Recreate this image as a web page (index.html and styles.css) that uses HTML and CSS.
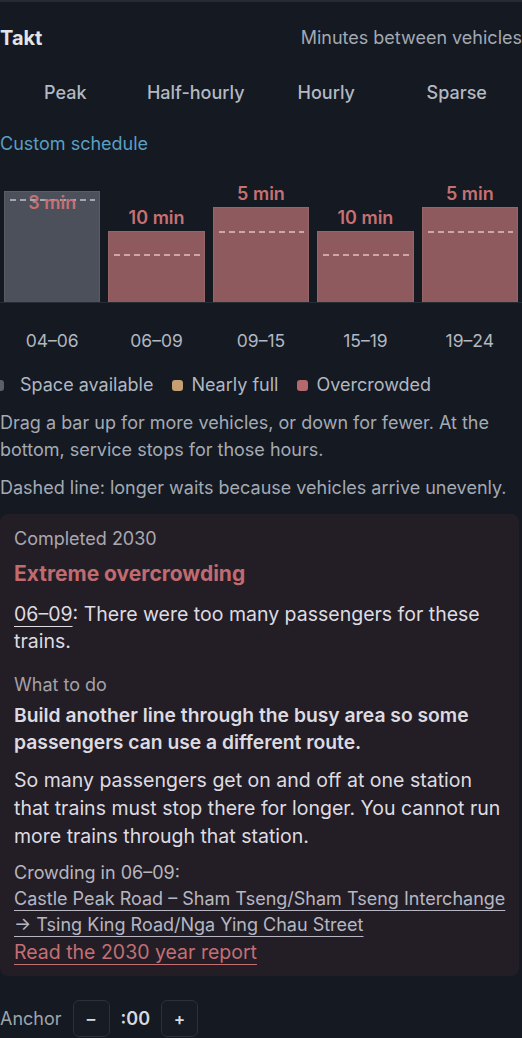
FILE: index.html
```html
<!DOCTYPE html>
<html lang="en">
<head>
<meta charset="utf-8">
<title>Takt</title>
<link rel="stylesheet" href="styles.css">
</head>
<body>
<div class="panel">
  <div class="head">
    <h2 class="title">Takt</h2>
    <span class="unit">Minutes between vehicles</span>
  </div>
  <div class="presets">
    <button class="preset">Peak</button>
    <button class="preset">Half-hourly</button>
    <button class="preset">Hourly</button>
    <button class="preset">Sparse</button>
  </div>
  <div class="custom">Custom schedule</div>
  <div class="chart">
    <div class="col"><div class="bar gray" style="height:111px"><span class="val inside">3 min</span><span class="dash" style="bottom:101px"></span></div></div>
    <div class="col"><div class="bar red" style="height:71px"><span class="val">10 min</span><span class="dash" style="bottom:46px"></span></div></div>
    <div class="col"><div class="bar red" style="height:95px"><span class="val">5 min</span><span class="dash" style="bottom:69px"></span></div></div>
    <div class="col"><div class="bar red" style="height:71px"><span class="val">10 min</span><span class="dash" style="bottom:46px"></span></div></div>
    <div class="col"><div class="bar red" style="height:95px"><span class="val">5 min</span><span class="dash" style="bottom:69px"></span></div></div>
  </div>
  <div class="axis">
    <span>04–06</span><span>06–09</span><span>09–15</span><span>15–19</span><span>19–24</span>
  </div>
  <div class="legend">
    <span class="item"><i class="sw sw-gray"></i>Space available</span>
    <span class="item"><i class="sw sw-tan"></i>Nearly full</span>
    <span class="item"><i class="sw sw-red"></i>Overcrowded</span>
  </div>
  <p class="hint hint-drag">Drag a bar up for more vehicles, or down for fewer. At the bottom, service stops for those hours.</p>
  <p class="hint hint-dash">Dashed line: longer waits because vehicles arrive unevenly.</p>

  <div class="card">
    <div class="card-kicker">Completed 2030</div>
    <div class="card-title">Extreme overcrowding</div>
    <p class="card-body"><span class="u">06–09</span>: There were too many passengers for these trains.</p>
    <div class="card-sub">What to do</div>
    <p class="card-strong">Build another line through the busy area so some passengers can use a different route.</p>
    <p class="card-body card-body2">So many passengers get on and off at one station that trains must stop there for longer. You cannot run more trains through that station.</p>
    <div class="card-crowd">Crowding in 06–09:</div>
    <a class="route" href="#">Castle Peak Road – Sham Tseng/Sham Tseng Interchange → Tsing King Road/Nga Ying Chau Street</a>
    <a class="report" href="#">Read the 2030 year report</a>
  </div>

  <div class="anchor">
    <span class="anchor-label">Anchor</span>
    <button class="step">–</button>
    <span class="anchor-val">:00</span>
    <button class="step">+</button>
  </div>
</div>
</body>
</html>
```

FILE: styles.css
```css
html, body {
  margin: 0;
  padding: 0;
  background: #141922;
}
body {
  font-family: Inter, "Noto Sans", "DejaVu Sans", sans-serif;
  color: #a4aab4;
  font-size: 18px;
  overflow: hidden;
}
.panel {
  border-top: 2px solid #252a33;
  width: 522px;
}
.head {
  display: flex;
  justify-content: space-between;
  align-items: center;
  margin-top: 24px;
  height: 24px;
}
.title {
  margin: 0;
  font-size: 20px;
  font-weight: 700;
  color: #e2e4e9;
  line-height: 24px;
}
.unit {
  font-size: 18px;
  color: #a3a9b3;
  line-height: 24px;
}
.presets {
  display: grid;
  grid-template-columns: repeat(4, 1fr);
  margin-top: 22px;
}
.preset {
  height: 40px;
  background: transparent;
  border: 0;
  font-family: inherit;
  font-size: 18px;
  font-weight: 500;
  color: #b3b8c1;
  padding: 0;
}
.custom {
  margin-top: 21px;
  line-height: 22px;
  color: #5a9fc2;
  font-size: 18px;
}
.chart {
  margin-top: 5px;
  height: 142px;
  display: grid;
  grid-template-columns: repeat(5, 1fr);
  border-bottom: 1px solid #262b34;
}
.col {
  display: flex;
  align-items: flex-end;
  padding: 0 4px 0 4px;
}
.bar {
  position: relative;
  flex: 1;
  box-sizing: border-box;
  border: 1px solid rgba(255, 255, 255, 0.07);
  border-bottom: 0;
}
.bar.gray { background: #4b505a; }
.bar.red { background: #8e5a5d; }
.val {
  position: absolute;
  left: 0;
  right: 0;
  bottom: 100%;
  margin-bottom: 4px;
  text-align: center;
  font-size: 18px;
  font-weight: 600;
  line-height: 20px;
  color: #c57174;
}
.val.inside {
  bottom: auto;
  top: 1px;
  margin: 0;
  z-index: 2;
}
.dash {
  position: absolute;
  left: 5px;
  right: 4px;
  height: 2px;
  background: repeating-linear-gradient(90deg, #d4aeae 0 6px, transparent 6px 10px);
  opacity: 0.9;
}
.bar.gray .dash {
  background: repeating-linear-gradient(90deg, #aeb1b9 0 6px, transparent 6px 10px);
}
.axis {
  display: grid;
  grid-template-columns: repeat(5, 1fr);
  margin-top: 27px;
  line-height: 22px;
  font-size: 17.5px;
  text-align: center;
  color: #b2b7c0;
}
.legend {
  display: flex;
  gap: 19px;
  margin-top: 22px;
  line-height: 22px;
  color: #b2b7c0;
}
.item {
  display: inline-flex;
  align-items: center;
  gap: 8px;
}
.sw {
  width: 11px;
  height: 11px;
  border-radius: 3px;
  display: inline-block;
}
.sw-gray { background: #5a5f69; margin-left: -7px; margin-right: 8px; }
.sw-tan { background: #c4a072; }
.sw-red { background: #b4696d; }
.hint {
  margin: 0;
  line-height: 27px;
  color: #a4aab4;
}
.hint-drag { margin-top: 13px; }
.hint-dash { margin-top: 11px; }
.card {
  margin-top: 13px;
  width: 519px;
  box-sizing: border-box;
  background: #231e25;
  border-radius: 8px;
  padding: 13px 12px 11px 14px;
}
.card-kicker {
  line-height: 24px;
  color: #a9a8b0;
}
.card-title {
  margin-top: 10px;
  line-height: 26px;
  font-size: 21px;
  font-weight: 700;
  color: #c06b71;
}
.card-body {
  margin: 14px 0 0;
  font-size: 19.5px;
  line-height: 27px;
  color: #dedbe1;
}
.u {
  text-decoration: underline;
  text-underline-offset: 5px;
  text-decoration-thickness: 1px;
}
.card-sub {
  margin-top: 18px;
  line-height: 24px;
  color: #a3a2aa;
}
.card-strong {
  margin: 5px 0 0;
  font-size: 19.3px;
  font-weight: 600;
  line-height: 27px;
  color: #dddae2;
}
.card-body2 {
  margin-top: 10px;
  line-height: 28px;
}
.card-crowd {
  margin-top: 10px;
  line-height: 26px;
  color: #b7b6be;
}
.route {
  display: block;
  line-height: 26px;
  color: #b6b7c2;
  text-decoration: underline;
  text-underline-offset: 5px;
  text-decoration-thickness: 1px;
}
.report {
  display: block;
  margin-top: 1px;
  line-height: 26px;
  color: #c46f74;
  text-decoration: underline;
  text-underline-offset: 5px;
  text-decoration-thickness: 1px;
  font-size: 19.5px;
}
.anchor {
  display: flex;
  align-items: center;
  margin-top: 24px;
  height: 37px;
}
.anchor-label {
  color: #9ea4ae;
  margin-right: 11px;
}
.step {
  width: 37px;
  height: 37px;
  box-sizing: border-box;
  border: 1px solid #2b313b;
  border-radius: 6px;
  background: #161b24;
  color: #d6d9df;
  font-family: inherit;
  font-size: 17px;
  font-weight: 600;
  padding: 0;
}
.anchor-val {
  margin: 0 11px 0 11px;
  font-size: 18px;
  font-weight: 600;
  color: #d6d9df;
}
```
